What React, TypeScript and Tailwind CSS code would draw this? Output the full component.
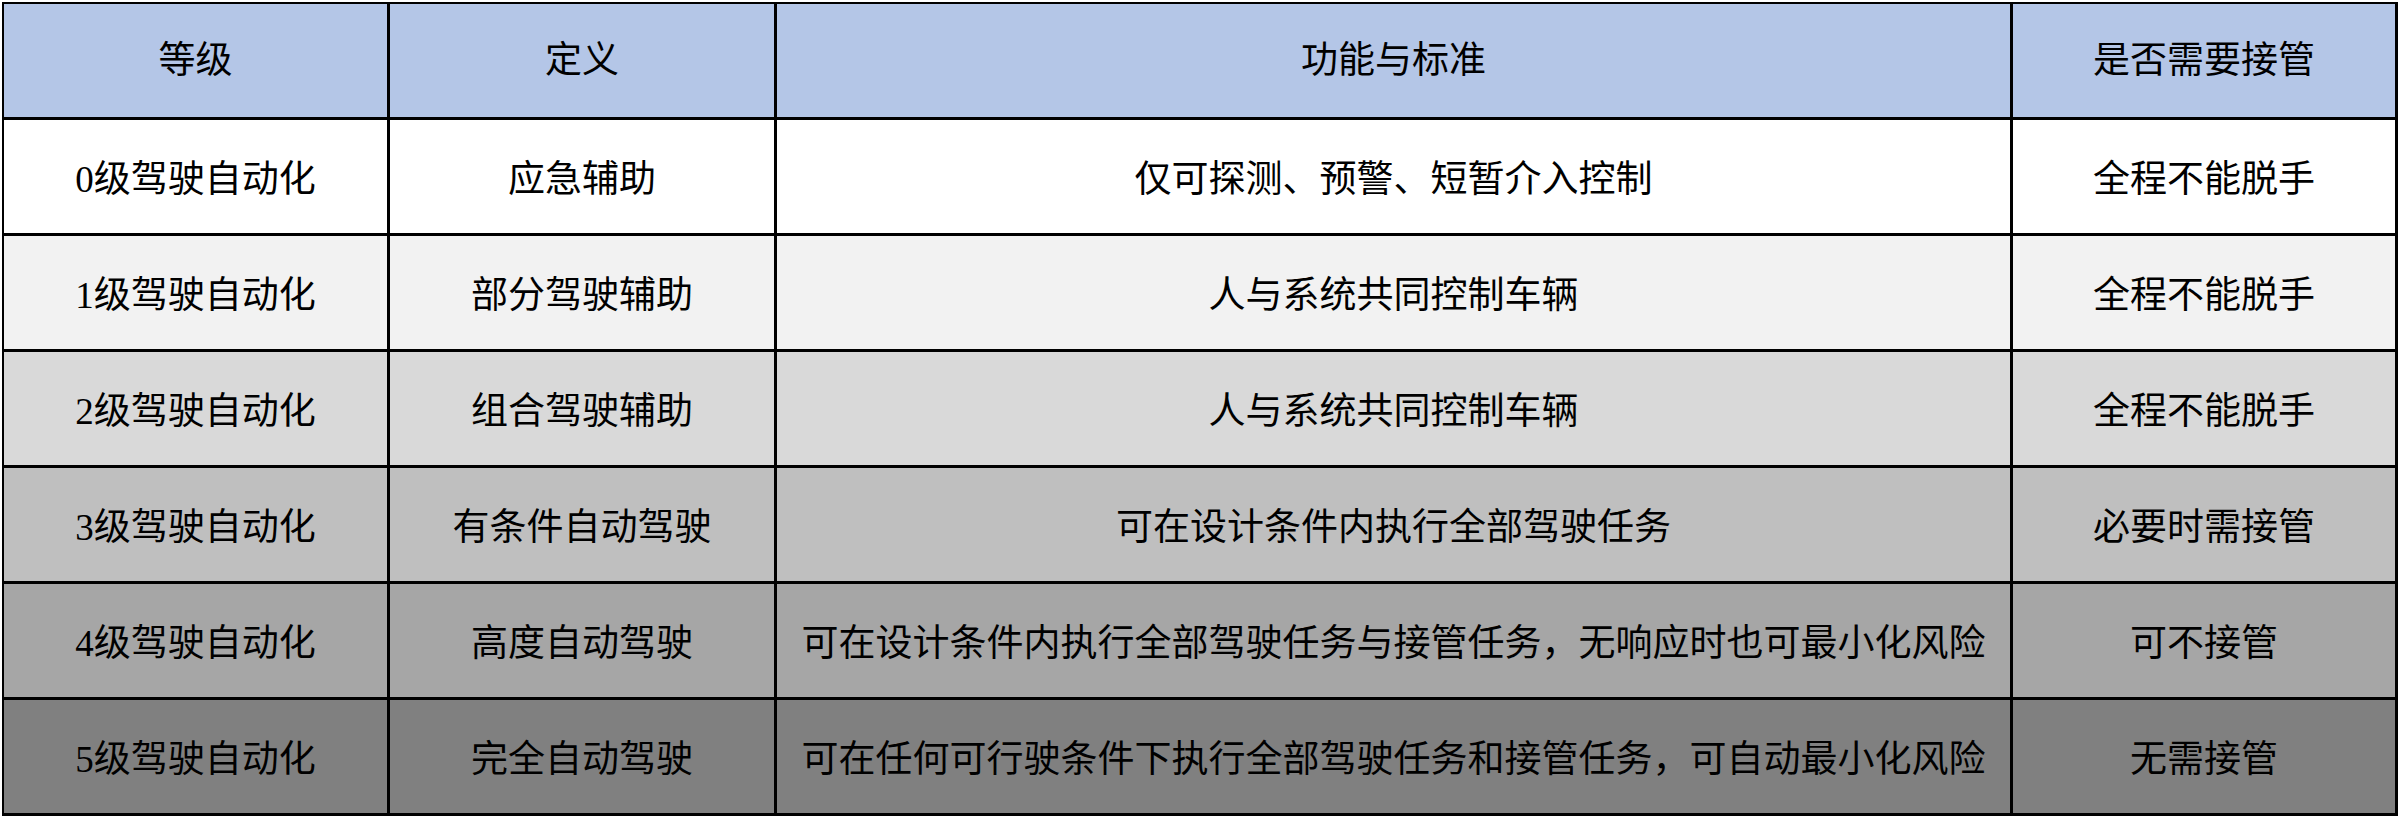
import React from "react";

const rows: { bg: string; cells: string[] }[] = [
  { bg: "bg-[#b4c6e7]", cells: ["等级", "定义", "功能与标准", "是否需要接管"] },
  { bg: "bg-white", cells: ["0级驾驶自动化", "应急辅助", "仅可探测、预警、短暂介入控制", "全程不能脱手"] },
  { bg: "bg-[#f2f2f2]", cells: ["1级驾驶自动化", "部分驾驶辅助", "人与系统共同控制车辆", "全程不能脱手"] },
  { bg: "bg-[#d9d9d9]", cells: ["2级驾驶自动化", "组合驾驶辅助", "人与系统共同控制车辆", "全程不能脱手"] },
  { bg: "bg-[#bfbfbf]", cells: ["3级驾驶自动化", "有条件自动驾驶", "可在设计条件内执行全部驾驶任务", "必要时需接管"] },
  { bg: "bg-[#a6a6a6]", cells: ["4级驾驶自动化", "高度自动驾驶", "可在设计条件内执行全部驾驶任务与接管任务，无响应时也可最小化风险", "可不接管"] },
  { bg: "bg-[#808080]", cells: ["5级驾驶自动化", "完全自动驾驶", "可在任何可行驶条件下执行全部驾驶任务和接管任务，可自动最小化风险", "无需接管"] },
];

export default function App() {
  return (
    <div className="w-[2400px] h-[818px] bg-white overflow-hidden">
      <div className="ml-[2px] mt-[2px] w-[2396px] bg-black pt-[2px] pl-[2px] pr-[3px] pb-[3px]">
        <div className="grid grid-cols-[383px_384px_1233px_382px] auto-rows-[113px] gap-[3px] [font-family:'Liberation_Serif','Noto_Sans_CJK_SC',serif] text-[37px] text-black leading-none">
          {rows.map((r, i) =>
            r.cells.map((c, j) => (
              <div
                key={`${i}-${j}`}
                className={`${r.bg} ${i === 0 ? "" : "pt-[5px]"} flex items-center justify-center whitespace-nowrap`}
              >
                {c}
              </div>
            ))
          )}
        </div>
      </div>
    </div>
  );
}
